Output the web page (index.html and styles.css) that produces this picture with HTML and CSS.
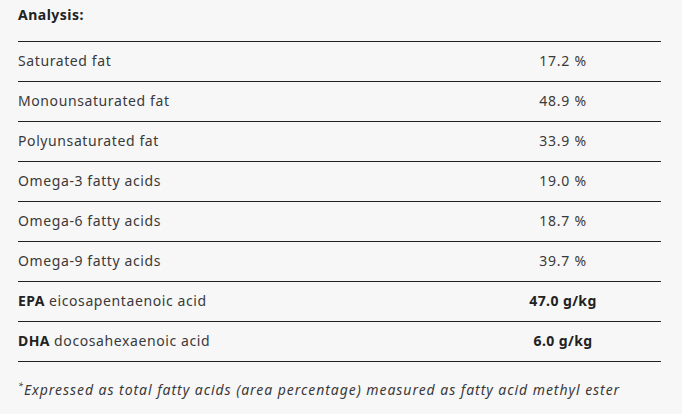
FILE: index.html
```html
<!DOCTYPE html>
<html lang="en">
<head>
<meta charset="utf-8">
<link rel="stylesheet" href="styles.css">
</head>
<body>
<div class="wrap">
  <h3 class="title">Analysis:</h3>
  <table class="analysis">
    <tr><td class="name">Saturated fat</td><td class="val">17.2 %</td></tr>
    <tr><td class="name">Monounsaturated fat</td><td class="val">48.9 %</td></tr>
    <tr><td class="name">Polyunsaturated fat</td><td class="val">33.9 %</td></tr>
    <tr><td class="name">Omega-3 fatty acids</td><td class="val">19.0 %</td></tr>
    <tr><td class="name">Omega-6 fatty acids</td><td class="val">18.7 %</td></tr>
    <tr><td class="name">Omega-9 fatty acids</td><td class="val">39.7 %</td></tr>
    <tr><td class="name"><b>EPA</b> eicosapentaenoic acid</td><td class="val"><b>47.0 g/kg</b></td></tr>
    <tr><td class="name"><b>DHA</b> docosahexaenoic acid</td><td class="val"><b>6.0 g/kg</b></td></tr>
  </table>
  <p class="note"><sup>*</sup>Expressed as total fatty acids (area percentage) measured as fatty acid methyl ester</p>
</div>
</body>
</html>
```
FILE: styles.css
```css
html, body {
  margin: 0;
  padding: 0;
  background: #f7f7f7;
}
body {
  font-family: "Noto Sans", "Open Sans", sans-serif;
  font-size: 14px;
  color: #3a3a3a;
  letter-spacing: 0.6px;
}
.wrap {
  padding: 0 21px 0 18px;
}
.title {
  margin: 0;
  height: 41px;
  line-height: 30px;
  font-size: 14px;
  font-weight: bold;
  color: #222;
  letter-spacing: 0.5px;
}
.analysis {
  width: 643px;
  border-collapse: collapse;
}
.analysis tr {
  border-top: 1px solid #222;
}
.analysis tr:last-child {
  border-bottom: 1px solid #222;
}
.analysis td {
  height: 37px;
  padding: 0 0 2px;
  vertical-align: middle;
}
.analysis b {
  color: #222;
  letter-spacing: 0.4px;
}
.val {
  width: 196px;
  text-align: center;
  letter-spacing: 0.75px;
}
.note {
  margin: 13px 0 0;
  font-style: italic;
  line-height: 22px;
  letter-spacing: 0.95px;
}
.note sup {
  font-size: 9px;
}
```
